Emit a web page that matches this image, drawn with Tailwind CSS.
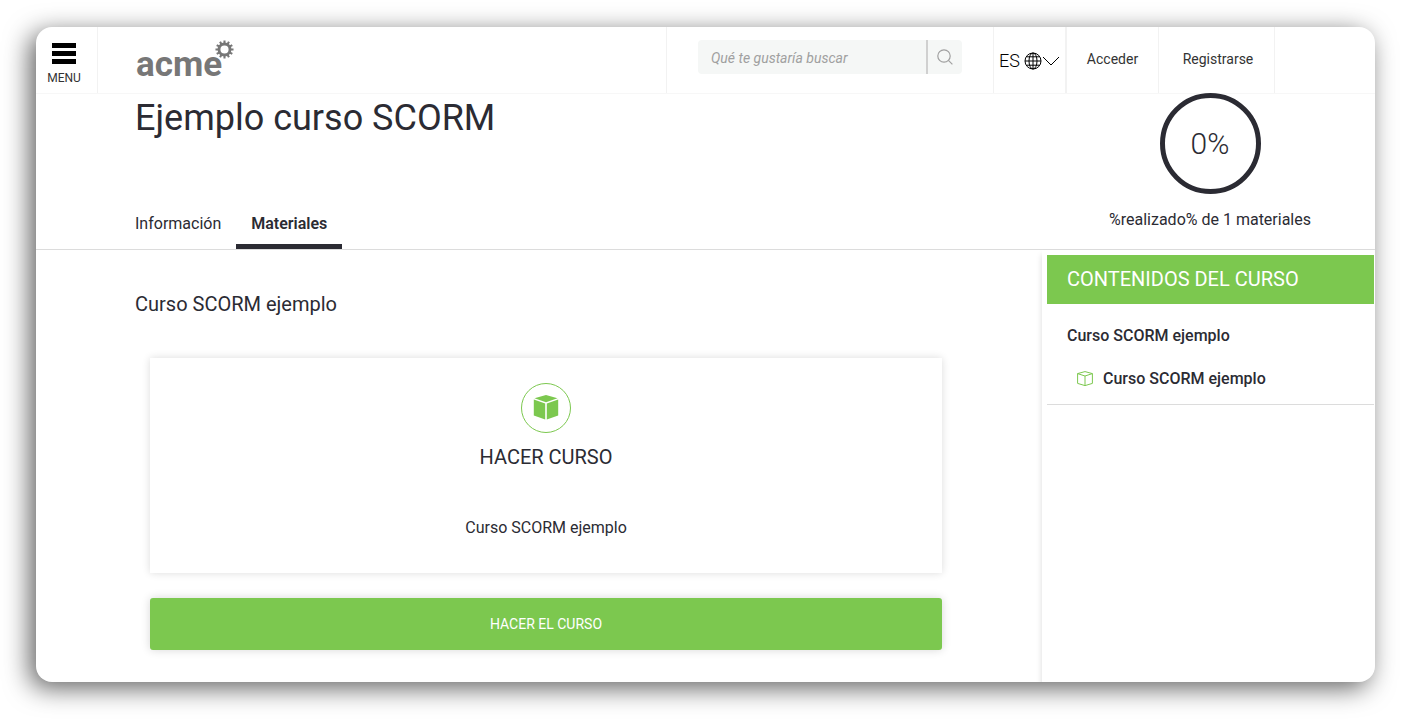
<!DOCTYPE html>
<html lang="es">
<head>
    <meta charset="UTF-8">
    <meta name="viewport" content="width=device-width, initial-scale=1.0">
    <title>Ejemplo curso SCORM</title>
    <script src="https://cdn.jsdelivr.net/npm/@tailwindcss/browser@4"></script>
</head>
<body class="bg-white font-[Roboto,sans-serif] text-[#2b2b33]">
    <div class="flex min-h-screen pt-[27px] pr-9 pb-11 pl-9">
        <div class="flex flex-1 flex-col overflow-hidden rounded-2xl bg-white shadow-[-6px_6px_26px_rgba(0,0,0,0.62)]">
            <header class="flex h-[67px] border-b border-[#f7f7f7] text-black">
                <button class="flex w-[62px] flex-col items-center border-r border-[#f2f2f2] pr-[5px] pt-4">
                    <svg class="h-[22px] w-6" viewBox="0 0 24 22" fill="currentColor">
                        <rect width="24" height="5"/>
                        <rect y="8" width="24" height="5"/>
                        <rect y="16" width="24" height="5"/>
                    </svg>
                    <span class="mt-[3px] text-xs leading-5 text-[#333]">MENU</span>
                </button>
                <a href="#" class="flex flex-1 border-r border-[#f2f2f2] pl-[38px] pt-[13px] text-[#777]">
                    <span class="pt-[5px] text-[35px] leading-10 font-bold">acme</span>
                    <svg class="-ml-[7px] h-[19px] w-[19px]" viewBox="-10 -10 20 20" fill="none" stroke="currentColor" stroke-width="2.2">
                        <circle r="5.8" stroke-width="3"/>
                        <path d="M0-6V-9.5M0 6V9.5M-6 0H-9.5M6 0H9.5M3-5.2L4.7-8.2M5.2-3L8.2-4.7M5.2 3L8.2 4.7M3 5.2L4.7 8.2M-3 5.2L-4.7 8.2M-5.2 3L-8.2 4.7M-5.2-3L-8.2-4.7M-3-5.2L-4.7-8.2"/>
                    </svg>
                </a>
                <form class="flex w-[327px] border-r border-[#f2f2f2] py-[13px] pl-[31px] pr-[31px]">
                    <input type="text" aria-label="Buscar" placeholder="Qué te gustaría buscar" class="h-[34px] min-w-0 flex-1 rounded-l bg-[#f5f7f6] px-[13px] pt-px text-sm italic placeholder:text-[#a0a0a0] outline-none">
                    <button type="button" aria-label="Buscar" class="flex h-[34px] w-9 items-center justify-center rounded-r border-l-2 border-[#d0d0d0] bg-[#f5f7f6] text-[#a0a0a0]">
                        <svg class="h-4 w-4" viewBox="0 0 16 16" fill="none" stroke="currentColor" stroke-width="1.2">
                            <circle cx="7" cy="7" r="6.2"/>
                            <path d="M11.4 11.4L15.4 15.4"/>
                        </svg>
                    </button>
                </form>
                <button class="flex w-[73px] items-center border-r-2 border-[#f2f2f2] pl-[5px] pt-0.5 text-lg font-light">
                    ES
                    <svg class="ml-1 h-[18px] w-[18px]" viewBox="0 0 18 18" fill="none" stroke="currentColor">
                        <circle cx="9" cy="9" r="8"/>
                        <ellipse cx="9" cy="9" rx="4" ry="8"/>
                        <path d="M9 1V17M1 9H17M2.5 4.8H15.5M2.5 13.2H15.5"/>
                    </svg>
                    <svg class="h-[18px] w-[18px]" viewBox="0 0 18 18" fill="none" stroke="currentColor">
                        <path d="M1 5L9 13L17 5"/>
                    </svg>
                </button>
                <nav class="flex text-sm leading-5 text-[#333]">
                    <a href="#" class="w-[92px] border-r border-[#f2f2f2] pt-[22px] text-center">Acceder</a>
                    <a href="#" class="w-[116px] border-r border-[#f2f2f2] pl-[3px] pt-[22px] text-center">Registrarse</a>
                </nav>
                <div class="w-[100px]"></div>
            </header>

            <section class="flex h-[156px] justify-between border-b border-[#dcdcdc] pl-[99px] pr-16">
                <div class="flex flex-col justify-between">
                    <h1 class="text-4xl leading-12">Ejemplo curso SCORM</h1>
                    <nav class="flex text-base leading-6">
                        <a href="#" class="pr-[15px]">Información</a>
                        <a href="#" class="border-b-5 border-[#2b2b33] px-[15px] pb-2 font-semibold">Materiales</a>
                    </nav>
                </div>
                <div class="-mt-px flex flex-col items-center">
                    <div class="flex h-[101px] w-[101px] items-center justify-center rounded-full border-5 border-[#2b2b33] text-3xl font-light">0%</div>
                    <p class="mt-[14px] text-base leading-6">%realizado% de 1 materiales</p>
                </div>
            </section>

            <div class="flex flex-1">
                <main class="flex-1 pl-[99px] pr-[100px] pt-10">
                    <h2 class="text-xl leading-7">Curso SCORM ejemplo</h2>
                    <div class="pl-[15px] pt-10">
                        <article class="flex h-[215px] flex-col items-center bg-white pt-[25px] shadow-[0_0_8px_rgba(0,0,0,0.14)]">
                            <div class="flex h-[50px] w-[50px] items-center justify-center rounded-full border border-[#7cc84f] text-[#7cc84f]">
                                <svg class="h-[26px] w-[26px]" viewBox="0 1 26 26" fill="currentColor">
                                    <path d="M13 1L24.5 4.3L13 8.2L1.5 4.3ZM.8 5.6L12.2 9.6V25.4L.8 21.4ZM25.2 5.6L13.8 9.6V25.4L25.2 21.4Z"/>
                                </svg>
                            </div>
                            <h3 class="mt-[10px] text-xl leading-7">HACER CURSO</h3>
                            <p class="mt-[45px] text-base leading-6">Curso SCORM ejemplo</p>
                        </article>
                        <button class="mt-[25px] h-[52px] w-full rounded-[3px] bg-[#7cc84f] text-sm text-white shadow-[0_0_10px_rgba(0,0,0,0.16)]">HACER EL CURSO</button>
                    </div>
                </main>
                <aside class="w-[333px] pl-[5px] pr-px pt-[5px] shadow-[0_5px_6px_rgba(0,0,0,0.15)]">
                    <h2 class="bg-[#7cc84f] px-5 py-[10px] text-xl leading-[29px] text-white">CONTENIDOS DEL CURSO</h2>
                    <div class="border-b border-[#dcdcdc] px-5 pb-[13px] pt-5 text-base leading-6 font-medium">
                        <h3>Curso SCORM ejemplo</h3>
                        <a href="#" class="mt-[19px] flex items-center pl-[10px]">
                            <svg class="mr-[10px] h-4 w-4" viewBox="0 0 16 16" fill="none" stroke="#7cc84f">
                                <path d="M8 .6L15.4 2.6V12.4L8 14.6L.6 12.4V2.6ZM.6 2.6L8 5L15.4 2.6M8 5V14.6"/>
                            </svg>
                            Curso SCORM ejemplo
                        </a>
                    </div>
                </aside>
            </div>
        </div>
    </div>
</body>
</html>
